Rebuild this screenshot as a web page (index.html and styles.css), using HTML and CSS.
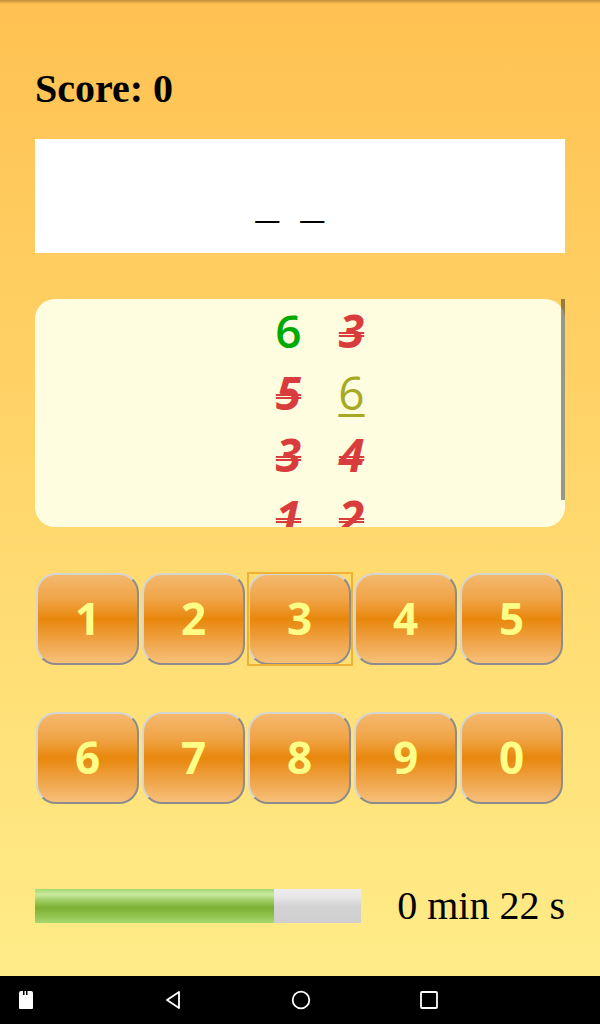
FILE: index.html
```html
<!DOCTYPE html>
<html>
<head>
<meta charset="utf-8">
<link rel="stylesheet" href="styles.css">
</head>
<body>
<div class="app">
  <div class="score">Score: 0</div>
  <div class="answer">_ _</div>
  <div class="panel-wrap">
    <div class="panel">
      <div class="row"><span class="cell ok">6</span><span class="cell bad">3</span></div>
      <div class="row"><span class="cell bad">5</span><span class="cell near">6</span></div>
      <div class="row"><span class="cell bad">3</span><span class="cell bad">4</span></div>
      <div class="row"><span class="cell bad">1</span><span class="cell bad">2</span></div>
    </div>
    <div class="scrollbar"></div>
  </div>
  <div class="keypad">
    <div class="key-cell"><div class="key">1</div></div>
    <div class="key-cell"><div class="key">2</div></div>
    <div class="key-cell focused"><div class="key">3</div></div>
    <div class="key-cell"><div class="key">4</div></div>
    <div class="key-cell"><div class="key">5</div></div>
  </div>
  <div class="keypad second">
    <div class="key-cell"><div class="key">6</div></div>
    <div class="key-cell"><div class="key">7</div></div>
    <div class="key-cell"><div class="key">8</div></div>
    <div class="key-cell"><div class="key">9</div></div>
    <div class="key-cell"><div class="key">0</div></div>
  </div>
  <div class="footer">
    <div class="bar"><div class="fill" style="width:239px"></div></div>
    <div class="timer">0 min 22 s</div>
  </div>
</div>
<div class="nav">
  <svg class="sd" width="16" height="20" viewBox="0 0 16 20"><path d="M3 1 H5 V5 H6.5 V1 H8 V5 H9.5 V1 H13 Q15 1 15 3 V18 Q15 19 14 19 H2 Q1 19 1 18 V3 Q1 1 3 1 Z" fill="#fff"/></svg>
  <svg class="nav-icon" width="20" height="20" viewBox="0 0 20 20"><path d="M16 2 L4 10 L16 18 Z" fill="none" stroke="#fff" stroke-width="1.8" stroke-linejoin="round"/></svg>
  <svg class="nav-icon" width="20" height="20" viewBox="0 0 20 20"><circle cx="10" cy="10" r="8.3" fill="none" stroke="#fff" stroke-width="1.8"/></svg>
  <svg class="nav-icon" width="20" height="20" viewBox="0 0 20 20"><rect x="2" y="2" width="16" height="16" rx="1" fill="none" stroke="#fff" stroke-width="1.8"/></svg>
</div>
</body>
</html>
```
FILE: styles.css
```css
html, body {
  margin: 0;
  padding: 0;
}
body {
  width: 600px;
  height: 1024px;
  overflow: hidden;
  display: flex;
  flex-direction: column;
}
.app {
  height: 976px;
  box-sizing: border-box;
  padding: 0 35px;
  background:
    linear-gradient(rgba(120, 80, 20, 0.45), rgba(120, 80, 20, 0) 4px),
    linear-gradient(#FFC152, #FFD96E 55%, #FFEC88);
  display: flex;
  flex-direction: column;
}
.score {
  margin-top: 67px;
  font-family: "Liberation Serif", serif;
  font-weight: bold;
  font-size: 40px;
  line-height: 44px;
  height: 44px;
  color: #000;
}
.answer {
  margin-top: 28px;
  height: 114px;
  box-sizing: border-box;
  background: #fff;
  padding-top: 50px;
  padding-right: 22px;
  text-align: center;
  font-family: "Liberation Mono", monospace;
  font-weight: bold;
  font-size: 40px;
  line-height: 40px;
  letter-spacing: -1.5px;
  color: #000;
}
.panel-wrap {
  position: relative;
  margin-top: 46px;
  height: 228px;
}
.panel {
  height: 228px;
  background: #FFFDE0;
  border-radius: 20px;
  overflow: hidden;
}
.scrollbar {
  position: absolute;
  right: 0;
  top: 0;
  width: 4px;
  height: 201px;
  background: rgba(0, 0, 0, 0.4);
}
.row {
  display: flex;
  height: 62px;
  padding-left: 222px;
}
.cell {
  width: 63px;
  text-align: center;
  font-family: "Open Sans", sans-serif;
  font-size: 46px;
  line-height: 62px;
}
.ok {
  color: #00AA00;
  font-weight: 600;
}
.near {
  color: #A6AA22;
  font-weight: 500;
  text-decoration: underline;
  text-decoration-thickness: 3px;
  text-underline-offset: 4px;
}
.bad {
  color: #D83C3C;
  font-weight: bold;
  font-style: italic;
  text-decoration: underline double;
  text-decoration-thickness: 2px;
  text-underline-offset: -16px;
  text-decoration-skip-ink: none;
}
.keypad {
  margin-top: 45px;
  display: grid;
  grid-template-columns: repeat(5, 106px);
  height: 94px;
}
.keypad.second {
  margin-top: 45px;
}
.key-cell {
  padding: 1px 2px 1px 1px;
  box-sizing: border-box;
}
.key-cell.focused {
  outline: 2px solid #EFB236;
  outline-offset: -2px;
}
.key {
  height: 100%;
  box-sizing: border-box;
  border: 2px solid;
  border-color: #D6D6D0 #8C8C8C #8C8C8C #D6D6D0;
  border-radius: 20px;
  background: linear-gradient(#F4B86E 0%, #F0A446 28%, #E8870C 50%, #EFA244 74%, #F6C07A 100%);
  display: flex;
  align-items: center;
  justify-content: center;
  font-family: "Open Sans", sans-serif;
  font-weight: bold;
  font-size: 44px;
  line-height: 44px;
  padding-bottom: 3px;
  color: #FFFF88;
}
.footer {
  margin-top: 84px;
  display: flex;
  align-items: center;
  justify-content: space-between;
  height: 34px;
}
.bar {
  width: 326px;
  height: 34px;
  background: linear-gradient(#EDEDED 0%, #E6E6E6 25%, #D3D3D3 50%, #CECECE 100%);
}
.fill {
  height: 100%;
  background: linear-gradient(#A4D872 0%, #C9EA9E 16%, #A2D068 32%, #7DB035 55%, #8EC24A 78%, #A6D870 100%);
}
.timer {
  font-family: "Liberation Serif", serif;
  font-size: 40px;
  line-height: 40px;
  color: #000;
}
.nav {
  height: 48px;
  background: #000;
  display: flex;
  align-items: center;
  position: relative;
}
.sd {
  margin-left: 18px;
  margin-right: 129px;
}
.nav-icon {
  margin-right: 108px;
}
```
